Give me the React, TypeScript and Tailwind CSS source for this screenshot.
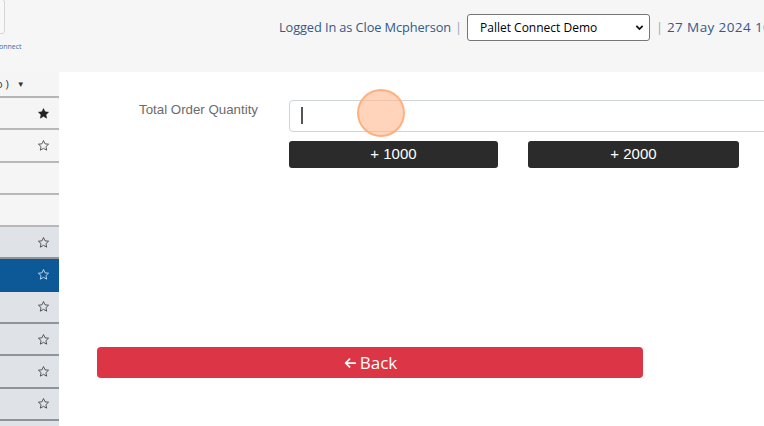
import { useState } from 'react';

const StarIcon = ({ filled, className }: { filled?: boolean; className?: string }) => (
  <svg viewBox="0 0 24 24" className={className} fill={filled ? 'currentColor' : 'none'} stroke="currentColor" strokeWidth={filled ? 1 : 1.6} strokeLinejoin="round">
    <path d="M12 2.8l2.8 6.1 6.6.7-4.9 4.5 1.4 6.5L12 17.3l-5.9 3.3 1.4-6.5-4.9-4.5 6.6-.7z" />
  </svg>
);

type Row = { star: 'filled' | 'outline' | 'none'; tone: 'light' | 'muted' | 'active' };

const rows: Row[] = [
  { star: 'filled', tone: 'light' },
  { star: 'outline', tone: 'light' },
  { star: 'none', tone: 'light' },
  { star: 'none', tone: 'light' },
  { star: 'outline', tone: 'muted' },
  { star: 'outline', tone: 'active' },
  { star: 'outline', tone: 'muted' },
  { star: 'outline', tone: 'muted' },
  { star: 'outline', tone: 'muted' },
  { star: 'outline', tone: 'muted' },
  { star: 'outline', tone: 'muted' },
];

const Sidebar = () => (
  <aside className="w-[59px] shrink-0 bg-[#f5f5f5] overflow-hidden">
    <div className="h-[26px] flex items-center gap-1 text-[11px] text-[#333] border-b-2 border-[#b5b5b5] whitespace-nowrap" style={{ marginLeft: -4 }}>
      <span>o )</span>
      <span className="text-[8px] ml-1">▼</span>
    </div>
    {rows.map((r, i) => (
      <div
        key={i}
        className={`h-[32.3px] flex items-center justify-end pr-[9px] border-b-2 ${
          r.tone === 'active'
            ? 'bg-[#0d5896] border-[#0d5896] text-[#cfe2f5]'
            : r.tone === 'muted'
            ? 'bg-[#dfe2e7] border-[#8f9499] text-[#444]'
            : 'bg-[#f5f5f5] border-[#b8b8b8] text-[#444]'
        }`}
      >
        {r.star !== 'none' && (
          <StarIcon filled={r.star === 'filled'} className={r.star === 'filled' ? 'w-[13px] h-[13px] text-[#222]' : 'w-[13px] h-[13px]'} />
        )}
      </div>
    ))}
  </aside>
);

export default function App() {
  const [qty, setQty] = useState('');

  const add = (n: number) => setQty((prev) => String((parseInt(prev || '0', 10) || 0) + n));

  return (
    <div className="w-[764px] h-[426px] overflow-hidden bg-white flex flex-col relative" style={{ fontFamily: '"Open Sans", "Liberation Sans", sans-serif' }}>
      {/* Top bar */}
      <header className="h-[72px] shrink-0 bg-[#f6f6f6] flex relative">
        <div className="w-[120px] shrink-0 relative">
          <div className="absolute left-[-30px] top-[-1px] w-[35px] h-[35px] border border-[#d6d6d6] rounded-[3px] bg-[#f8f8f8]" />
          <div className="absolute left-0 top-[43px] text-[7px] text-[#3d6aa6] leading-none" style={{ marginLeft: -1 }}>onnect</div>
        </div>
        <div className="flex items-start pt-[14px] pl-[159px] whitespace-nowrap text-[12.8px] text-[#33598a] tracking-[-0.1px]">
          <span className="leading-[27px]">Logged In as Cloe Mcpherson</span>
          <span className="leading-[27px] text-[#9aa5b5] ml-[4px] mr-[5px]">|</span>
          <div className="w-[183px] h-[27px] border border-[#767676] rounded-[3px] bg-white flex items-center justify-between pl-[12px] pr-[5px] text-[12px] text-black tracking-normal">
            <span>Pallet Connect Demo</span>
            <svg viewBox="0 0 10 10" className="w-[9px] h-[9px]" fill="none" stroke="#111" strokeWidth={2}>
              <path d="M1.5 3.2l3.5 3.5 3.5-3.5" />
            </svg>
          </div>
          <span className="leading-[27px] text-[#9aa5b5] ml-[6px] mr-[4px]">|</span>
          <span className="leading-[27px] text-[13.5px] tracking-[0.4px]">27 May 2024 10:42</span>
        </div>
      </header>

      <div className="flex flex-1 min-h-0">
        <Sidebar />

        <main className="flex-1 pl-[38px] pt-[28px]">
          <div className="flex">
            <label className="w-[161px] text-right text-[13.3px] text-[#6b6b6b]" style={{ fontFamily: '"Liberation Sans", Arial, sans-serif' }}>
              Total Order Quantity
            </label>
            <div className="ml-[31px] flex flex-col gap-[9px]">
              <div className="w-[520px] h-[32px] border border-[#cfd4da] rounded-[4px] bg-white flex items-center pl-[12px]">
                <input
                  value={qty}
                  onChange={(e) => setQty(e.target.value)}
                  className="outline-none w-full text-[14px] text-[#333] bg-transparent"
                />
                <span className="absolute left-[301px] top-[107px] w-[1.5px] h-[17px] bg-[#555]" />
              </div>
              <div className="flex gap-[30px]" style={{ fontFamily: '"Liberation Sans", Arial, sans-serif' }}>
                <button onClick={() => add(1000)} className="w-[209px] h-[27px] bg-[#2b2b2b] rounded-[3px] text-white text-[15px]">
                  + 1000
                </button>
                <button onClick={() => add(2000)} className="w-[211px] h-[27px] bg-[#2b2b2b] rounded-[3px] text-white text-[15px]">
                  + 2000
                </button>
              </div>
            </div>
          </div>

          <button className="mt-[179px] w-[546px] h-[31px] bg-[#dc3545] rounded-[4px] text-white text-[17px] flex items-center justify-center gap-[3px]">
            <svg viewBox="0 0 16 16" className="w-[14px] h-[14px]" fill="none" stroke="currentColor" strokeWidth={2} strokeLinecap="round" strokeLinejoin="round">
              <path d="M14 8H3M7.5 3.5L3 8l4.5 4.5" />
            </svg>
            <span className="leading-none">Back</span>
          </button>
        </main>
      </div>

      {/* click indicator */}
      <div className="absolute left-[357px] top-[89px] w-[48px] h-[48px] rounded-full bg-[#ffb88c]/60 border-2 border-[#ffa870]/80 pointer-events-none" />
    </div>
  );
}
